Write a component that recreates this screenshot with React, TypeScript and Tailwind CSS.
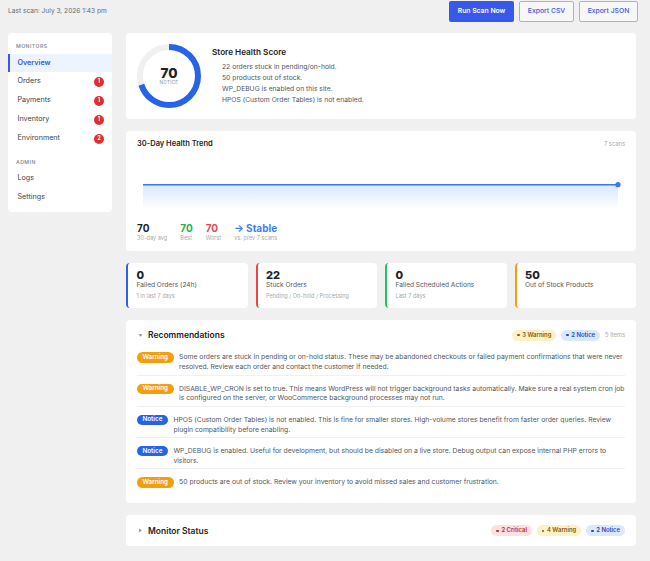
import React from 'react';

const monitors = [
    { label: 'Overview', active: true },
    { label: 'Orders', count: 1 },
    { label: 'Payments', count: 1 },
    { label: 'Inventory', count: 1 },
    { label: 'Environment', count: 2 },
];

const admin = ['Logs', 'Settings'];

const issues = [
    '22 orders stuck in pending/on-hold.',
    '50 products out of stock.',
    'WP_DEBUG is enabled on this site.',
    'HPOS (Custom Order Tables) is not enabled.',
];

const kpis = [
    { value: '0', label: 'Failed Orders (24h)', sub: '1 in last 7 days', border: 'border-[#2563eb]' },
    { value: '22', label: 'Stuck Orders', sub: 'Pending / On-hold / Processing', border: 'border-[#ef4444]' },
    { value: '0', label: 'Failed Scheduled Actions', sub: 'Last 7 days', border: 'border-[#22c55e]' },
    { value: '50', label: 'Out of Stock Products', sub: '', border: 'border-[#f59e0b]' },
];

const recs = [
    {
        type: 'Warning',
        text: 'Some orders are stuck in pending or on-hold status. These may be abandoned checkouts or failed payment confirmations that were never resolved. Review each order and contact the customer if needed.',
    },
    {
        type: 'Warning',
        text: 'DISABLE_WP_CRON is set to true. This means WordPress will not trigger background tasks automatically. Make sure a real system cron job is configured on the server, or WooCommerce background processes may not run.',
    },
    {
        type: 'Notice',
        text: 'HPOS (Custom Order Tables) is not enabled. This is fine for smaller stores. High-volume stores benefit from faster order queries. Review plugin compatibility before enabling.',
    },
    {
        type: 'Notice',
        text: 'WP_DEBUG is enabled. Useful for development, but should be disabled on a live store. Debug output can expose internal PHP errors to visitors.',
    },
    {
        type: 'Warning',
        text: '50 products are out of stock. Review your inventory to avoid missed sales and customer frustration.',
    },
];

const pillStyles: Record<string, string> = {
    critical: 'bg-[#fde0e0] text-[#c62828]',
    warning: 'bg-[#fdf1c7] text-[#8a5a00]',
    notice: 'bg-[#dce8fd] text-[#2447c9]',
};

const Pill = ({ kind, label }: { kind: string; label: string }) => (
    <span className={`flex items-center gap-[2.5px] h-[11px] px-[5px] rounded-full text-[5.9px] font-semibold ${pillStyles[kind]}`}>
        <span className="w-[2.5px] h-[2.5px] rounded-full bg-current" />
        {label}
    </span>
);

const Caret = ({ open }: { open: boolean }) => (
    <svg width="5" height="5" viewBox="0 0 5 5" className="shrink-0">
        {open ? <path d="M0.5 1.2 L4.5 1.2 L2.5 3.8 Z" fill="#8c8f94" /> : <path d="M1.2 0.5 L3.8 2.5 L1.2 4.5 Z" fill="#8c8f94" />}
    </svg>
);

const App = () => {
    return (
        <div className="min-h-[561px] bg-[#f0f0f1] pl-[8px] pr-[12px] pt-[1px] pb-[14px] font-['Inter','Noto_Sans',sans-serif] text-[#1d2327]">
            <div className="flex items-center justify-between h-[21px]">
                <p className="text-[6.6px] text-[#646970]">Last scan: July 3, 2026 1:43 pm</p>
                <div className="flex gap-[5px]">
                    <button className="h-[21px] w-[65px] rounded-[2px] bg-[#3858e9] text-white text-[6.8px] font-semibold">Run Scan Now</button>
                    <button className="h-[21px] w-[55px] rounded-[2px] border border-[#a3b0ef] bg-[#f6f7f7] text-[#3858e9] text-[6.8px] font-medium">Export CSV</button>
                    <button className="h-[21px] w-[59px] rounded-[2px] border border-[#a3b0ef] bg-[#f6f7f7] text-[#3858e9] text-[6.8px] font-medium">Export JSON</button>
                </div>
            </div>

            <div className="flex items-start gap-[14px] mt-[11px]">
                <aside className="w-[104px] shrink-0 bg-white rounded-[4px] pt-[9px] pb-[5px]">
                    <div className="h-[8px] leading-[8px] pl-[8px] text-[5.2px] font-semibold tracking-[0.08em] text-[#8c8f94] uppercase">Monitors</div>
                    <ul className="mt-[4px]">
                        {monitors.map((m) =>
                            m.active ? (
                                <li key={m.label} className="h-[18px] flex items-center border-l-2 border-[#3858e9] bg-[#eef4ff] pl-[7.5px] text-[7.2px] font-semibold text-[#2d5be3]">
                                    {m.label}
                                </li>
                            ) : (
                                <li key={m.label} className="h-[19px] flex items-center justify-between pl-[9.5px] pr-[8px] text-[7.2px] text-[#3c434a]">
                                    {m.label}
                                    <span className="w-[10px] h-[10px] rounded-full bg-[#e02d2d] text-white text-[5.5px] font-bold flex items-center justify-center">{m.count}</span>
                                </li>
                            )
                        )}
                    </ul>
                    <div className="mt-[10px] h-[8px] leading-[8px] pl-[8px] text-[5.2px] font-semibold tracking-[0.08em] text-[#8c8f94] uppercase">Admin</div>
                    <ul className="mt-[3px]">
                        {admin.map((a) => (
                            <li key={a} className="h-[19px] flex items-center pl-[9.5px] text-[7.2px] text-[#3c434a]">{a}</li>
                        ))}
                    </ul>
                </aside>

                <main className="flex-1 mr-[2px] flex flex-col gap-[12px]">
                    <section className="bg-white rounded-[4px] p-[11px] flex items-center gap-[11px]">
                        <div className="relative w-[64px] h-[64px] shrink-0">
                            <svg width="64" height="64" viewBox="0 0 64 64">
                                <circle cx="32" cy="32" r="29" fill="none" stroke="#f0f0f1" strokeWidth="6" />
                                <circle cx="32" cy="32" r="29" fill="none" stroke="#2563eb" strokeWidth="6" strokeDasharray="182.2" strokeDashoffset="54.7" transform="rotate(-90 32 32)" />
                            </svg>
                            <div className="absolute inset-0 flex flex-col items-center justify-center">
                                <span className="text-[13.5px] leading-[13px] font-extrabold text-[#1d2327]">70</span>
                                <span className="text-[4.6px] leading-[5px] tracking-[0.06em] text-[#8c8f94] uppercase">Notice</span>
                            </div>
                        </div>
                        <div>
                            <h2 className="text-[8.2px] leading-[11px] font-semibold mb-[2.7px]">Store Health Score</h2>
                            <ul className="pl-[10px]">
                                {issues.map((i) => (
                                    <li key={i} className="text-[6.75px] leading-[11px] text-[#50575e]">{i}</li>
                                ))}
                            </ul>
                        </div>
                    </section>

                    <section className="bg-white rounded-[4px] px-[11px] pt-[8px] pb-[9px]">
                        <div className="flex items-center justify-between h-[10px]">
                            <h2 className="text-[7.5px] font-semibold">30-Day Health Trend</h2>
                            <span className="text-[5.8px] text-[#a7aaad]">7 scans</span>
                        </div>
                        <svg viewBox="0 0 488 60" className="block w-full h-[60px]">
                            <defs>
                                <linearGradient id="trendFill" x1="0" y1="0" x2="0" y2="1">
                                    <stop offset="0" stopColor="#3b82f6" stopOpacity="0.2" />
                                    <stop offset="1" stopColor="#3b82f6" stopOpacity="0" />
                                </linearGradient>
                            </defs>
                            <rect x="6" y="35.7" width="475" height="24.3" fill="url(#trendFill)" />
                            <line x1="6" y1="35.7" x2="481" y2="35.7" stroke="#3b78f2" strokeWidth="1.5" />
                            <circle cx="481" cy="35.7" r="2.6" fill="#3b78f2" />
                        </svg>
                        <div className="flex gap-[13px] mt-[14px]">
                            <div>
                                <div className="text-[10px] leading-[11px] font-bold">70</div>
                                <div className="mt-[1px] text-[5.6px] leading-[7px] text-[#a7aaad]">30-day avg</div>
                            </div>
                            <div>
                                <div className="text-[10px] leading-[11px] font-bold text-[#22b14c]">70</div>
                                <div className="mt-[1px] text-[5.6px] leading-[7px] text-[#a7aaad]">Best</div>
                            </div>
                            <div>
                                <div className="text-[10px] leading-[11px] font-bold text-[#e5484d]">70</div>
                                <div className="mt-[1px] text-[5.6px] leading-[7px] text-[#a7aaad]">Worst</div>
                            </div>
                            <div>
                                <div className="text-[10px] leading-[11px] font-bold text-[#3f7df4]">→ Stable</div>
                                <div className="mt-[1px] text-[5.6px] leading-[7px] text-[#a7aaad]">vs. prev 7 scans</div>
                            </div>
                        </div>
                    </section>

                    <div className="grid grid-cols-4 gap-[8px]">
                        {kpis.map((k) => (
                            <div key={k.label} className={`h-[45px] bg-white rounded-[4px] border-l-2 ${k.border} pl-[8.5px] pt-[5.7px]`}>
                                <div className="text-[11px] leading-[12px] font-extrabold">{k.value}</div>
                                <div className="text-[6.6px] leading-[9px] text-[#50575e]">{k.label}</div>
                                {k.sub && <div className="mt-[2.5px] text-[5.6px] leading-[8px] text-[#a7aaad]">{k.sub}</div>}
                            </div>
                        ))}
                    </div>

                    <section className="bg-white rounded-[4px] px-[11px] pt-[10px] pb-[13px]">
                        <div className="flex items-center h-[10px]">
                            <div className="flex items-center gap-[5px] pl-[1px]">
                                <Caret open />
                                <h2 className="text-[8.5px] font-semibold">Recommendations</h2>
                            </div>
                            <div className="ml-auto flex items-center gap-[5px]">
                                <Pill kind="warning" label="3 Warning" />
                                <Pill kind="notice" label="2 Notice" />
                                <span className="text-[5.8px] text-[#a7aaad]">5 items</span>
                            </div>
                        </div>
                        <div className="mt-[4.3px]">
                            {recs.map((r, i) => (
                                <div key={i} className={`flex items-start gap-[5.5px] pt-[8px] pb-[2.7px] ${i > 0 ? 'border-t border-[#f0f0f1]' : ''}`}>
                                    <span className={`shrink-0 h-[10.3px] px-[5.5px] rounded-full flex items-center text-[6.3px] font-semibold text-white ${r.type === 'Warning' ? 'bg-[#f59e0b]' : 'bg-[#2563eb]'}`}>
                                        {r.type}
                                    </span>
                                    <p className="flex-1 text-[6.8px] leading-[9.8px] text-[#50575e]">{r.text}</p>
                                </div>
                            ))}
                        </div>
                    </section>

                    <section className="bg-white rounded-[4px] px-[11px] py-[9.5px]">
                        <div className="flex items-center h-[12px]">
                            <div className="flex items-center gap-[5px] pl-[1px]">
                                <Caret open={false} />
                                <h2 className="text-[8.5px] font-semibold">Monitor Status</h2>
                            </div>
                            <div className="ml-auto flex items-center gap-[5px]">
                                <Pill kind="critical" label="2 Critical" />
                                <Pill kind="warning" label="4 Warning" />
                                <Pill kind="notice" label="2 Notice" />
                            </div>
                        </div>
                    </section>
                </main>
            </div>
        </div>
    );
};

export default App;
